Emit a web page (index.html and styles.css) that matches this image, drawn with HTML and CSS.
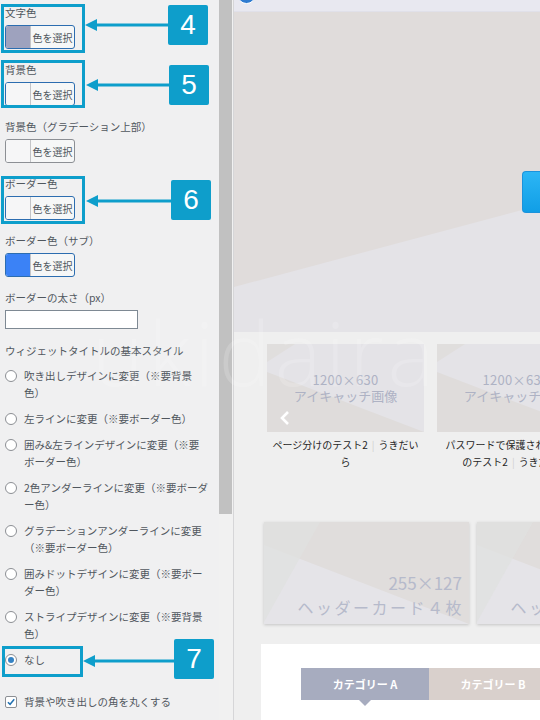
FILE: index.html
```html
<!DOCTYPE html>
<html lang="ja">
<head>
<meta charset="utf-8">
<title>Customizer</title>
<link rel="stylesheet" href="styles.css">
</head>
<body>
<div class="app">
  <aside class="panel">
    <div class="panel-inner">
      <div class="field">
        <div class="label">文字色</div>
        <div class="color-btn"><span class="swatch swatch-purple"></span><span class="btn-text">色を選択</span></div>
      </div>
      <div class="field">
        <div class="label">背景色</div>
        <div class="color-btn"><span class="swatch"></span><span class="btn-text">色を選択</span></div>
      </div>
      <div class="field">
        <div class="label">背景色（グラデーション上部）</div>
        <div class="color-btn plain"><span class="swatch"></span><span class="btn-text">色を選択</span></div>
      </div>
      <div class="field">
        <div class="label">ボーダー色</div>
        <div class="color-btn"><span class="swatch"></span><span class="btn-text">色を選択</span></div>
      </div>
      <div class="field">
        <div class="label">ボーダー色（サブ）</div>
        <div class="color-btn"><span class="swatch swatch-blue"></span><span class="btn-text">色を選択</span></div>
      </div>
      <div class="field field-input">
        <div class="label">ボーダーの太さ（px）</div>
        <div class="text-input"></div>
      </div>
      <div class="label">ウィジェットタイトルの基本スタイル</div>
      <div class="options">
        <div class="option"><span class="radio"></span><span class="opt-text">吹き出しデザインに変更（※要背景色）</span></div>
        <div class="option"><span class="radio"></span><span class="opt-text">左ラインに変更（※要ボーダー色）</span></div>
        <div class="option"><span class="radio"></span><span class="opt-text">囲み&amp;左ラインデザインに変更（※要ボーダー色）</span></div>
        <div class="option"><span class="radio"></span><span class="opt-text">2色アンダーラインに変更（※要ボーダー色）</span></div>
        <div class="option"><span class="radio"></span><span class="opt-text">グラデーションアンダーラインに変更（※要ボーダー色）</span></div>
        <div class="option"><span class="radio"></span><span class="opt-text">囲みドットデザインに変更（※要ボーダー色）</span></div>
        <div class="option"><span class="radio"></span><span class="opt-text">ストライプデザインに変更（※要背景色）</span></div>
        <div class="option"><span class="radio checked"></span><span class="opt-text">なし</span></div>
      </div>
      <div class="option check-row">
        <span class="checkbox"><svg viewBox="0 0 12 12" width="12" height="12"><path d="M2.3 6.2 L4.9 8.8 L9.9 2.8" fill="none" stroke="#2271b1" stroke-width="1.8"/></svg></span>
        <span class="opt-text">背景や吹き出しの角を丸くする</span>
      </div>
    </div>
    <div class="scrollbar"><div class="thumb"></div></div>
  </aside>

  <main class="preview">
    <div class="topbar"><span class="topbar-dot"></span></div>
    <div class="hero">
      <svg class="hero-bg" viewBox="0 0 306 320" preserveAspectRatio="none">
        <rect width="306" height="320" fill="#e0dcdb"/>
        <polygon points="0,275 288,198 306,193 306,320 0,320" fill="#e4e3e7"/>
      </svg>
      <div class="hero-btn"></div>
    </div>

    <div class="cards">
      <div class="card">
        <div class="card-img">
          <svg class="img-bg" viewBox="0 0 157 88" preserveAspectRatio="none">
            <rect width="157" height="88" fill="#e4e3e7"/>
            <polygon points="0,28 157,88 0,88" fill="#dfdcdb"/>
            <polygon points="0,0 28,0 0,18" fill="#e0dedd"/>
          </svg>
          <div class="img-text"><div class="img-size">1200×630</div><div>アイキャッチ画像</div></div>
          <svg class="prev-arrow" viewBox="0 0 12 16" width="12" height="16"><polyline points="9,2 3,8 9,14" fill="none" stroke="#fff" stroke-width="2.6"/></svg>
        </div>
        <div class="card-title">ページ分けのテスト2<span class="sep">|</span>うきだいら</div>
      </div>
      <div class="card">
        <div class="card-img">
          <svg class="img-bg" viewBox="0 0 157 88" preserveAspectRatio="none">
            <rect width="157" height="88" fill="#e4e3e7"/>
            <polygon points="0,28 157,88 0,88" fill="#dfdcdb"/>
            <polygon points="0,0 28,0 0,18" fill="#e0dedd"/>
          </svg>
          <div class="img-text"><div class="img-size">1200×630</div><div>アイキャッチ画像</div></div>
        </div>
        <div class="card-title">パスワードで保護されたページのテスト2<span class="sep">|</span>うきだいら</div>
      </div>
    </div>

    <div class="hcards">
      <div class="hcard">
        <svg class="img-bg" viewBox="0 0 205 102" preserveAspectRatio="none">
          <rect width="205" height="102" fill="#e0dddc"/>
          <polygon points="0,23 205,102 0,102" fill="#e5e4e8"/>
          <polygon points="0,0 56,0 0,100" fill="#e0e1e0" fill-opacity="0.8"/>
        </svg>
        <div class="hcard-text"><div class="hcard-size">255×127</div><div class="hcard-name">ヘッダーカード４枚</div></div>
      </div>
      <div class="hcard">
        <svg class="img-bg" viewBox="0 0 205 102" preserveAspectRatio="none">
          <rect width="205" height="102" fill="#e0dddc"/>
          <polygon points="0,23 205,102 0,102" fill="#e5e4e8"/>
          <polygon points="0,0 56,0 0,100" fill="#e0e1e0" fill-opacity="0.8"/>
        </svg>
        <div class="hcard-text"><div class="hcard-size">255×127</div><div class="hcard-name">ヘッダーカード４枚</div></div>
      </div>
    </div>

    <section class="white-sec">
      <div class="tabs">
        <div class="tab tab-a">カテゴリー A</div>
        <div class="tab tab-b">カテゴリー B</div>
      </div>
    </section>
  </main>

  <div class="watermark">ukidaira</div>

  <svg class="annot" viewBox="0 0 240 720" width="240" height="720">
    <g fill="none" stroke="#0e9ecb" stroke-width="3">
      <rect x="2.5" y="5.5" width="81" height="46"/>
      <rect x="2.5" y="61.5" width="81" height="45"/>
      <rect x="2.5" y="177.5" width="81" height="45"/>
      <rect x="3.5" y="647.5" width="78" height="28"/>
      <line x1="96" y1="25" x2="169" y2="25"/>
      <line x1="97" y1="85" x2="170" y2="85"/>
      <line x1="97" y1="201" x2="172" y2="201"/>
      <line x1="94" y1="661" x2="175" y2="661"/>
    </g>
    <g fill="#0e9ecb">
      <polygon points="85,25 97,19 97,31"/>
      <polygon points="86,85 98,79 98,91"/>
      <polygon points="86,201 98,195 98,207"/>
      <polygon points="83,661 95,655 95,667"/>
    </g>
  </svg>
  <div class="badge badge-4">4</div>
  <div class="badge badge-5">5</div>
  <div class="badge badge-6">6</div>
  <div class="badge badge-7">7</div>
</div>
</body>
</html>
```

FILE: styles.css
```css
* { box-sizing: border-box; }
html, body { margin: 0; padding: 0; }
body {
  width: 540px;
  height: 720px;
  overflow: hidden;
  background: #f0f0f1;
  font-family: "Noto Sans CJK JP", "Noto Sans", sans-serif;
  text-spacing-trim: space-all;
}
.app {
  position: relative;
  display: flex;
  width: 540px;
  height: 720px;
}

/* ---------- left panel ---------- */
.panel {
  flex: none;
  width: 234px;
  height: 720px;
  display: flex;
  background: #f0f0f1;
  border-right: 1px solid #d6d6d8;
}
.panel-inner {
  width: 219px;
  padding: 6px 0 0 5px;
}
.scrollbar {
  width: 14px;
  padding-right: 1px;
  background: #f1f1f1;
}
.thumb {
  width: 13px;
  height: 514px;
  background: #c1c1c1;
}
.field { margin-bottom: 14px; }
.field-input { margin-bottom: 15px; }
.label {
  font-size: 10.5px;
  line-height: 14px;
  color: #50575e;
  margin-bottom: 5px;
  white-space: nowrap;
}
.color-btn {
  display: flex;
  width: 70px;
  height: 24px;
  border: 1px solid #2c6db0;
  border-radius: 3px;
  background: #f6f7f7;
  overflow: hidden;
}
.color-btn.plain { border-color: #8c8f94; }
.swatch {
  width: 25px;
  flex: none;
  background: #f6f6f7;
  border-right: 1px solid #c3c4c7;
}
.swatch-purple { background: #9ea2be; }
.swatch-blue { background: #3b82f6; }
.btn-text {
  flex: 1;
  display: flex;
  align-items: center;
  justify-content: center;
  font-size: 10px;
  color: #50575e;
}
.text-input {
  width: 133px;
  height: 19px;
  background: #fff;
  border: 1px solid #7e8993;
}
.options {
  margin-top: 9px;
  display: flex;
  flex-direction: column;
  gap: 9px;
}
.option {
  display: flex;
  align-items: flex-start;
  gap: 7px;
}
.radio, .checkbox {
  flex: none;
  width: 12px;
  height: 12px;
  margin-top: 2.5px;
  background: #fff;
  border: 1px solid #8c8f94;
  border-radius: 50%;
  display: flex;
  align-items: center;
  justify-content: center;
}
.radio.checked::before {
  content: "";
  width: 6px;
  height: 6px;
  border-radius: 50%;
  background: #3582c4;
}
.checkbox {
  border-radius: 2px;
}
.checkbox svg { display: block; }
.opt-text {
  width: 185px;
  font-size: 10.5px;
  line-height: 17px;
  color: #50575e;
  line-break: loose;
}
.check-row { margin-top: 25px; }

/* ---------- preview ---------- */
.preview {
  flex: 1;
  min-width: 0;
  height: 720px;
  background: #efefef;
  overflow: hidden;
}
.topbar {
  height: 12px;
  display: flex;
  background: #e8e8f0;
  border-bottom: 1px solid #e0e0e9;
}
.topbar-dot {
  width: 19px;
  height: 19px;
  margin: -15px 0 0 3px;
  border-radius: 50%;
  background: #2f7bd0;
  border: 1.5px solid #fff;
}
.hero {
  height: 320px;
  display: grid;
}
.hero > * { grid-area: 1 / 1; }
.hero-bg {
  display: block;
  width: 100%;
  height: 320px;
}
.hero-btn {
  justify-self: end;
  align-self: start;
  margin-top: 159px;
  width: 18px;
  height: 42px;
  border-radius: 4px 0 0 4px;
  border: 1px solid #1b93dc;
  border-right: none;
  background: linear-gradient(#2cb6f5, #119ee6);
}
.cards {
  display: flex;
  gap: 13px;
  padding: 12px 0 0 33px;
}
.card {
  flex: none;
  width: 157px;
}
.card-img {
  position: relative;
  height: 88px;
  display: grid;
}
.card-img > .img-bg,
.card-img > .img-text { grid-area: 1 / 1; }
.img-bg {
  display: block;
  width: 100%;
  height: 100%;
}
.img-text {
  align-self: center;
  text-align: center;
  font-size: 13px;
  line-height: 16px;
  color: #aeb2c4;
}
.img-size { letter-spacing: 0.3px; }
.prev-arrow {
  position: absolute;
  left: 12px;
  top: 66px;
}
.card-title {
  margin-top: 5px;
  padding: 0 4px;
  font-size: 10px;
  line-height: 16.5px;
  text-align: center;
  color: #262626;
  line-break: loose;
}
.sep {
  color: #d0d0d0;
  margin: 0 4px;
}
.hcards {
  display: flex;
  gap: 8px;
  margin-top: 52px;
  padding-left: 30px;
}
.hcard {
  flex: none;
  width: 205px;
  height: 102px;
  display: grid;
  box-shadow: 0 1px 3px rgba(0, 0, 0, 0.18);
}
.hcard > * { grid-area: 1 / 1; }
.hcard-text {
  align-self: end;
  text-align: right;
  padding: 0 5px 5px 0;
  color: #b6bacb;
  line-height: 24px;
  white-space: nowrap;
}
.hcard-size {
  font-size: 17px;
  padding-right: 2px;
}
.hcard-name {
  font-size: 16px;
  letter-spacing: 2.5px;
}
.white-sec {
  margin: 20px 0 0 27px;
  height: 100px;
  background: #fff;
  padding: 24px 0 0 40px;
}
.tabs { display: flex; }
.tab {
  position: relative;
  flex: none;
  width: 128px;
  height: 32px;
  display: flex;
  align-items: center;
  justify-content: center;
  font-size: 11px;
  font-weight: 700;
  color: #fff;
}
.tab-a { background: #a7acbf; }
.tab-b { background: #d9d0cc; }
.tab-a::after {
  content: "";
  position: absolute;
  left: 58px;
  top: 32px;
  border-left: 6px solid transparent;
  border-right: 6px solid transparent;
  border-top: 6px solid #a7acbf;
}

/* ---------- overlays ---------- */
.watermark {
  position: absolute;
  left: 92px;
  top: 292px;
  font-family: "Open Sans", "Noto Sans", sans-serif;
  font-weight: 300;
  font-size: 88px;
  letter-spacing: 4px;
  color: rgba(255, 255, 255, 0.16);
  pointer-events: none;
}
.annot {
  position: absolute;
  left: 0;
  top: 0;
  pointer-events: none;
}
.badge {
  position: absolute;
  width: 40px;
  height: 40px;
  border-radius: 2px;
  background: #0e9ecb;
  color: #fff;
  font-family: "Liberation Sans", Arial, sans-serif;
  font-size: 28px;
  line-height: 40px;
  text-align: center;
}
.badge-4 { left: 168px; top: 5px; }
.badge-5 { left: 169px; top: 65px; }
.badge-6 { left: 171px; top: 180px; }
.badge-7 { left: 174px; top: 639px; }
```
